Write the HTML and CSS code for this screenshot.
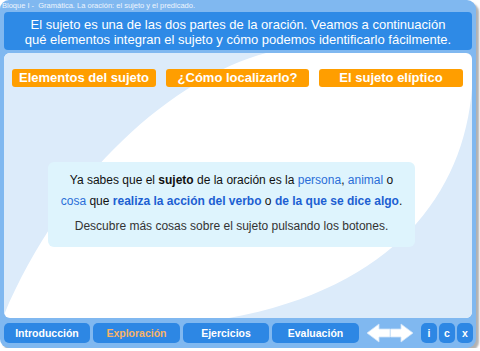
FILE: index.html
```html
<!DOCTYPE html>
<html lang="es">
<head>
<meta charset="utf-8">
<title>El sujeto</title>
<link rel="stylesheet" href="styles.css">
</head>
<body>
<div class="frame">
  <div class="crumb">Bloque I -&nbsp; Gramática. La oración: el sujeto y el predicado.</div>
  <div class="banner">El sujeto es una de las dos partes de la oración. Veamos a continuación<br>qué elementos integran el sujeto y cómo podemos identificarlo fácilmente.</div>
  <div class="panel">
    <svg class="swoosh" width="468" height="265" viewBox="0 0 468 265" aria-hidden="true">
      <path d="M0 0 H262 C170 25 60 120 0 262 Z" fill="#dcebfa"/>
      <path d="M468 35 C460 140 390 235 225 265 H468 Z" fill="#dcebfa"/>
    </svg>
    <div class="tabs">
      <div class="tab t1">Elementos del sujeto</div>
      <div class="tab t2">¿Cómo localizarlo?</div>
      <div class="tab t3">El sujeto elíptico</div>
    </div>
    <div class="info">
      <p>Ya sabes que el <b>sujeto</b> de la oración es la <span class="lk">persona</span>, <span class="lk">animal</span> o<br><span class="lk">cosa</span> que <b class="lk">realiza la acción del verbo</b> o <b class="lk">de la que se dice algo</b>.</p>
      <p class="hint">Descubre más cosas sobre el sujeto pulsando los botones.</p>
    </div>
  </div>
  <div class="nav">
    <div class="nb w86">Introducción</div>
    <div class="nb w87 active">Exploración</div>
    <div class="nb w86">Ejercicios</div>
    <div class="nb w87">Evaluación</div>
    <div class="arrows">
      <svg width="50" height="20" viewBox="0 0 50 20" aria-hidden="true">
        <path d="M2 10 L14 1 V6 H25 V14 H14 V19 Z" fill="#ffffff" stroke="#cfe3f8" stroke-width="0.8"/>
        <path d="M48 10 L36 1 V6 H25.5 V14 H36 V19 Z" fill="#ffffff" stroke="#cfe3f8" stroke-width="0.8"/>
      </svg>
    </div>
    <div class="sq">i</div>
    <div class="sq">c</div>
    <div class="sq">x</div>
  </div>
</div>
</body>
</html>
```
FILE: styles.css
```css
html, body {
  margin: 0;
  padding: 0;
  background: #ffffff;
}
body {
  font-family: "Liberation Sans", Arial, sans-serif;
}
.frame {
  width: 476px;
  height: 348px;
  box-sizing: border-box;
  background: #80b8f0;
  border-radius: 9px;
  box-shadow: 3px 3px 2px rgba(0, 0, 0, 0.3);
  padding: 0 4px 5px 4px;
  display: flex;
  flex-direction: column;
}
.crumb {
  height: 12px;
  line-height: 12px;
  font-size: 7.5px;
  color: #eef5fd;
  margin-left: -2px;
  white-space: nowrap;
}
.banner {
  height: 38px;
  box-sizing: border-box;
  background: #2e8ae6;
  border-radius: 4px;
  color: #ffffff;
  font-size: 13px;
  line-height: 15px;
  padding-top: 5px;
  text-align: center;
  white-space: nowrap;
}
.panel {
  margin-top: 3px;
  height: 265px;
  box-sizing: border-box;
  background: #ffffff;
  border-radius: 6px;
  position: relative;
  overflow: hidden;
  padding: 16px 9px 0 8px;
}
.swoosh {
  position: absolute;
  left: 0;
  top: 0;
}
.tabs {
  position: relative;
  display: flex;
  gap: 10px;
}
.tab {
  height: 18px;
  line-height: 18px;
  background: #ff9e00;
  border-radius: 3px;
  color: #ffffff;
  font-weight: bold;
  font-size: 13px;
  text-align: center;
  white-space: nowrap;
}
.t1 { width: 144px; }
.t2 { width: 143px; }
.t3 { width: 144px; }
.info {
  position: relative;
  margin: 75px 0 0 36px;
  width: 367px;
  height: 85px;
  box-sizing: border-box;
  background: #def4fd;
  border-radius: 6px;
  padding-top: 8px;
  text-align: center;
  font-size: 12px;
  line-height: 21px;
  color: #111111;
}
.info p {
  margin: 0;
  white-space: nowrap;
}
.info .hint {
  margin-top: 4px;
  color: #333333;
}
.lk {
  color: #2a6ed8;
}
b.lk {
  color: #1c5fd2;
}
.nav {
  margin-top: 5px;
  height: 20px;
  display: flex;
  gap: 3px;
}
.nb {
  height: 20px;
  line-height: 20px;
  background: #2d87e4;
  border-radius: 5px;
  color: #ffffff;
  font-weight: bold;
  font-size: 10.5px;
  text-align: center;
}
.w86 { width: 86px; }
.w87 { width: 87px; }
.nb.active {
  color: #f8b468;
}
.arrows {
  width: 56px;
  display: flex;
  justify-content: center;
  align-items: center;
}
.sq {
  width: 16px;
  height: 20px;
  line-height: 20px;
  background: #2d87e4;
  border-radius: 5px;
  color: #ffffff;
  font-weight: bold;
  font-size: 10.5px;
  text-align: center;
  margin-right: -1px;
}
```
